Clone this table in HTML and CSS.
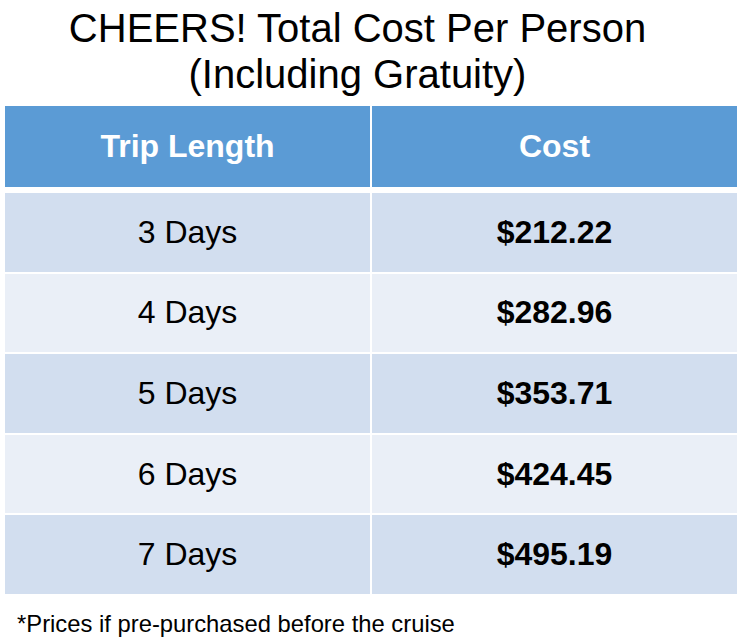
FILE: index.html
```html
<!DOCTYPE html>
<html>
<head>
<meta charset="utf-8">
<link rel="stylesheet" href="styles.css">
</head>
<body>
<div class="page">
  <h1 class="title">CHEERS! Total Cost Per Person<br>(Including Gratuity)</h1>
  <div class="table">
    <div class="row head">
      <div class="cell">Trip Length</div>
      <div class="cell">Cost</div>
    </div>
    <div class="row odd">
      <div class="cell">3 Days</div>
      <div class="cell price">$212.22</div>
    </div>
    <div class="row even">
      <div class="cell">4 Days</div>
      <div class="cell price">$282.96</div>
    </div>
    <div class="row odd">
      <div class="cell">5 Days</div>
      <div class="cell price">$353.71</div>
    </div>
    <div class="row even">
      <div class="cell">6 Days</div>
      <div class="cell price">$424.45</div>
    </div>
    <div class="row odd">
      <div class="cell">7 Days</div>
      <div class="cell price">$495.19</div>
    </div>
  </div>
  <p class="note">*Prices if pre-purchased before the cruise</p>
</div>
</body>
</html>
```
FILE: styles.css
```css
html, body {
  margin: 0;
  padding: 0;
  background: #ffffff;
}
.page {
  width: 744px;
  height: 640px;
  font-family: "Liberation Sans", Arial, sans-serif;
  color: #000;
  overflow: hidden;
}
.title {
  margin: 0;
  padding: 5px 29px 0 0;
  font-size: 40px;
  line-height: 46px;
  font-weight: normal;
  text-align: center;
}
.table {
  margin: 9px 0 0 5px;
  width: 732px;
  display: flex;
  flex-direction: column;
  gap: 2px;
}
.row {
  display: grid;
  grid-template-columns: 365px 365px;
  column-gap: 2px;
  height: 78.6px;
}
.row.head {
  height: 81px;
  margin-bottom: 4px;
}
.cell {
  display: flex;
  align-items: center;
  justify-content: center;
  font-size: 32px;
}
.head .cell {
  background: #5b9bd5;
  color: #ffffff;
  font-weight: bold;
}
.odd .cell {
  background: #d2deef;
}
.even .cell {
  background: #eaeff7;
}
.price {
  font-weight: bold;
}
.note {
  margin: 16px 0 0 17px;
  font-size: 23.8px;
  line-height: 27px;
}
```
